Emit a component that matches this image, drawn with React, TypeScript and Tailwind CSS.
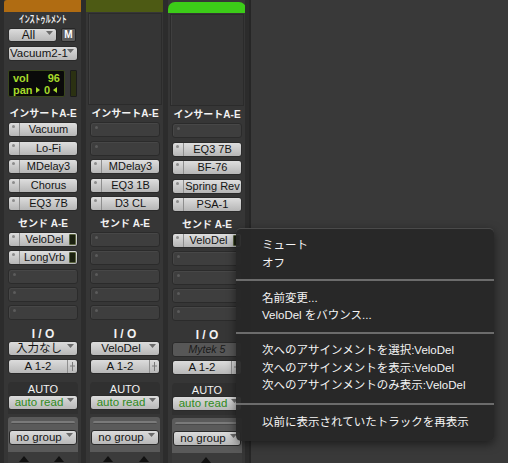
import React from "react";

type SlotProps = { label?: string; send?: boolean };

const Tri = ({ className = "" }: { className?: string }) => (
  <svg width="7" height="4" viewBox="0 0 7 4" className={className}>
    <path d="M0 0 L7 0 L3.5 4 Z" fill="#6a6a6a" />
  </svg>
);

// insert / send slot
const Slot = ({ label, send }: SlotProps) => {
  if (!label) {
    return (
      <div className="h-[15px] rounded-[3px] border border-[#2b2b2b] bg-[#3e3e3e] relative shadow-[inset_1px_1px_0_#474747]">
        <div className="absolute left-[4px] top-[3px] w-[3px] h-[3px] rounded-full bg-[#5c5c5c]" />
      </div>
    );
  }
  return (
    <div className="h-[15px] rounded-[3px] border border-[#2a2a2a] bg-linear-to-b from-[#dedede] to-[#b6b6b6] flex">
      <div className="w-[11px] shrink-0 border-r border-[#8e8e8e] relative">
        <div className="absolute left-[3px] top-[2px] w-[3px] h-[3px] rounded-full bg-[#8c8c8c]" />
      </div>
      <div className="flex-1 flex justify-center text-[11px] leading-[13px] text-[#141414] whitespace-nowrap">
        {label}
      </div>
      {send && (
        <div className="w-[7px] my-[1px] mr-[1px] bg-[#1b2010] border border-[#5b6540] rounded-[1px]" />
      )}
    </div>
  );
};

const Drop = ({
  label,
  green,
  left,
}: {
  label: string;
  green?: boolean;
  left?: boolean;
}) => (
  <div className="h-[15px] rounded-[3px] border border-[#2a2a2a] bg-linear-to-b from-[#dcdcdc] to-[#b8b8b8] relative">
    <div
      className={
        (left ? "text-left pl-[1px] " : "text-center pr-[8px] ") +
        (green ? "text-[#2f8a20] " : "text-[#141414] ") +
        "text-[11.5px] leading-[13px] whitespace-nowrap"
      }
    >
      {label}
    </div>
    <Tri className="absolute right-[3px] top-[2px]" />
  </div>
);

const Out = () => (
  <div className="h-[15px] rounded-[3px] border border-[#2a2a2a] bg-linear-to-b from-[#dcdcdc] to-[#b8b8b8] flex">
    <div className="flex-1 text-center text-[11.5px] leading-[13px] text-[#141414]">
      A 1-2
    </div>
    <div className="w-[10px] border-l border-[#8e8e8e] flex items-center justify-center">
      <svg width="5" height="9" viewBox="0 0 5 9">
        <path d="M2.5 0 V9 M0 4 H5" stroke="#7a7a7a" strokeWidth="1" />
      </svg>
    </div>
  </div>
);

const Label = ({ children, cls = "" }: { children: React.ReactNode; cls?: string }) => (
  <div className={"text-center text-[#f2f2f2] whitespace-nowrap " + cls}>{children}</div>
);

type StripProps = {
  color: string;
  top?: React.ReactNode;
  inserts: (string | undefined)[];
  sends: (string | undefined)[];
  io: React.ReactNode;
  arrows: number[];
};

const Strip = ({ color, top, inserts, sends, io, arrows }: StripProps) => (
  <div className="w-[79px] h-[463px] flex flex-col bg-[#363636] border-x border-[#2c2c2c] pl-[4px] pr-[3px] overflow-hidden">
    <div className={color} />
    <div className="h-[94px]">{top}</div>

    <Label cls="h-[15px] leading-[15px] text-[10px] font-bold">インサートA-E</Label>
    <div className="mt-[1px] flex flex-col gap-[3.5px]">
      {inserts.map((s, i) => (
        <Slot key={i} label={s} />
      ))}
    </div>

    <Label cls="mt-[5px] h-[15px] leading-[15px] text-[10px] font-bold">センド A-E</Label>
    <div className="mt-[1px] flex flex-col gap-[3.3px]">
      {sends.map((s, i) => (
        <Slot key={i} label={s} send />
      ))}
    </div>

    <Label cls="mt-[8px] h-[13px] leading-[13px] text-[12px] font-bold">I / O</Label>
    <div className="flex flex-col gap-[3.3px]">
      {io}
      <Out />
    </div>

    <div className="mt-[8px] rounded-t-[4px] bg-[#303030] pt-[1px] pb-[4px]">
      <Label cls="h-[12px] leading-[12px] text-[11px]">AUTO</Label>
      <Drop label="auto read" green />
    </div>

    <div className="mt-[3px] rounded-t-[3px] bg-[#5a5a5a] h-[35px] px-[1px] pt-[4px]">
      <div className="h-[3px] mx-[2px] rounded-full bg-[#7a7a7a] border-b border-[#4a4a4a]" />
      <div className="mt-[6px]">
        <Drop label="no group" />
      </div>
    </div>
    <div className="relative flex-1 bg-[#3b3b3b]">
      {arrows.map((x) => (
        <svg
          key={x}
          width="10"
          height="6"
          viewBox="0 0 10 6"
          className="absolute top-[4px]"
          style={{ left: x - 9 }}
        >
          <path d="M0 6 L5 0 L10 6 Z" fill="#111" />
        </svg>
      ))}
    </div>
  </div>
);

const EmptyTop = () => (
  <div className="h-[92px] mt-[1px] -mx-[2px] border border-[#2b2b2b] bg-[#353535] shadow-[inset_1px_0_0_#3f3f3f]" />
);

const PanArrow = ({ dir }: { dir: "r" | "l" }) => (
  <svg width="4" height="6" viewBox="0 0 4 6" className="inline-block mx-[3px]">
    <path d={dir === "r" ? "M0 0 L4 3 L0 6 Z" : "M4 0 L0 3 L4 6 Z"} fill="#a6da2a" />
  </svg>
);

const InstrTop = () => (
  <div className="flex flex-col">
    <div className="h-[13px] mt-[1px] flex justify-center overflow-visible">
      <span className="inline-block text-[10px] leading-[13px] font-bold text-[#f2f2f2] whitespace-nowrap scale-x-[0.53]">
        インストゥルメント
      </span>
    </div>
    <div className="mt-[2px] flex gap-[4px] h-[14px]">
      <div className="w-[49px] h-[14px] rounded-[3px] border border-[#2a2a2a] bg-linear-to-b from-[#dcdcdc] to-[#b8b8b8] relative">
        <div className="text-center pr-[8px] text-[12px] leading-[12px] text-[#141414]">All</div>
        <Tri className="absolute right-[3px] top-[2px]" />
      </div>
      <div className="w-[15px] h-[14px] rounded-[2px] border border-[#262626] bg-[#5c5c5c] flex items-center justify-center">
        <span className="text-[10px] font-bold leading-[10px] text-white">M</span>
      </div>
    </div>
    <div className="mt-[4px]">
      <Drop label="Vacuum2-1" left />
    </div>
    <div className="mt-[9px] flex gap-[5px]">
      <div className="w-[57px] h-[27px] rounded-[2px] bg-[#0a0a0a] border border-[#39461c] px-[4px] pt-[1px] text-[#a6da2a] text-[11px] font-bold leading-[12px]">
        <div className="flex justify-between">
          <span>vol</span>
          <span>96</span>
        </div>
        <div className="flex justify-between items-center whitespace-nowrap">
          <span className="flex items-center">
            pan
            <PanArrow dir="r" />
          </span>
          <span className="flex items-center">
            0
            <PanArrow dir="l" />
          </span>
        </div>
      </div>
      <div className="w-[7px] h-[27px] bg-[#2b3112] border border-[#1c1c1c] rounded-[1px]" />
    </div>
  </div>
);

const menuItem = "h-[17.5px] leading-[17.5px] pl-[26px] text-[11.5px] text-[#f4f4f4] whitespace-nowrap";

const Sep = () => (
  <div className="h-[17.5px] pt-[7px]">
    <div className="h-[2px] bg-[#6c6c6c]" />
  </div>
);

export default function App() {
  return (
    <div className="w-[508px] h-[463px] relative overflow-hidden bg-[#2c2c2c] flex gap-[3px] pl-[3px] font-['Liberation_Sans','Noto_Sans_CJK_JP',sans-serif]">
      <Strip
        color="h-[12px] -mx-[4px] bg-[#b06c12] rounded-tl-[3px]"
        top={<InstrTop />}
        inserts={["Vacuum", "Lo-Fi", "MDelay3", "Chorus", "EQ3 7B"]}
        sends={["VeloDel", "LongVrb", undefined, undefined, undefined]}
        io={<Drop label="入力なし" />}
        arrows={[20, 55]}
      />
      <Strip
        color="h-[12px] -mx-[4px] bg-[#4d5a14]"
        top={<EmptyTop />}
        inserts={[undefined, undefined, "MDelay3", "EQ3 1B", "D3 CL"]}
        sends={[undefined, undefined, undefined, undefined, undefined]}
        io={<Drop label="VeloDel" />}
        arrows={[22, 58]}
      />
      <Strip
        color="h-[11px] mt-[2px] -mx-[4px] bg-[#3ccc18] rounded-t-[7px]"
        top={<EmptyTop />}
        inserts={[undefined, "EQ3 7B", "BF-76", "Spring Rev", "PSA-1"]}
        sends={["VeloDel", undefined, undefined, undefined, undefined]}
        io={
          <div className="h-[15px] rounded-[3px] border border-[#2a2a2a] bg-[#575757] text-center text-[10.5px] leading-[13px] italic text-[#1a1a1a]">
            Mytek 5
          </div>
        }
        arrows={[38]}
      />
      <div className="flex-1 bg-[#393939] border-l-2 border-[#262626]" />

      <div className="absolute left-[236px] top-[228px] w-[258px] h-[213px] rounded-[5px] bg-[#272727]/95 border-t border-[#4a4a4a] pt-[8px] shadow-[0_3px_10px_rgba(0,0,0,0.5)]">
        <div className={menuItem}>ミュート</div>
        <div className={menuItem}>オフ</div>
        <Sep />
        <div className={menuItem}>名前変更...</div>
        <div className={menuItem}>VeloDel をバウンス...</div>
        <Sep />
        <div className={menuItem}>次へのアサインメントを選択:VeloDel</div>
        <div className={menuItem}>次へのアサインメントを表示:VeloDel</div>
        <div className={menuItem}>次へのアサインメントのみ表示:VeloDel</div>
        <div className="h-[19px] pt-[8px]">
          <div className="h-[2px] bg-[#6c6c6c]" />
        </div>
        <div className={menuItem}>以前に表示されていたトラックを再表示</div>
      </div>
    </div>
  );
}
